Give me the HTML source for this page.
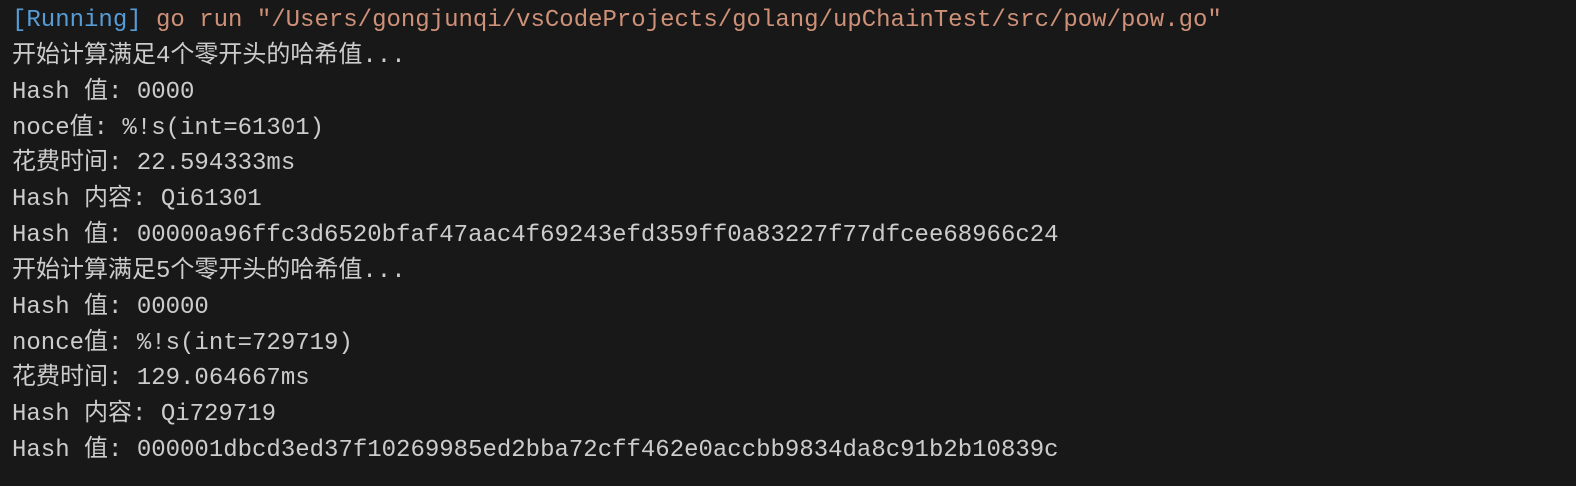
<!DOCTYPE html>
<html><head><meta charset="utf-8"><style>
html,body{margin:0;padding:0;background:#181818;width:1576px;height:486px;overflow:hidden}
pre{margin:0;padding:3px 0 0 12px;font-family:"Liberation Mono","Noto Sans CJK SC",monospace;font-size:24px;line-height:35.85px;color:#cccccc;white-space:pre}
.b{color:#569cd6}.o{color:#ce9178}
</style></head><body><pre><span class="b">[Running]</span> <span class="o">go run "/Users/gongjunqi/vsCodeProjects/golang/upChainTest/src/pow/pow.go"</span>
开始计算满足4个零开头的哈希值...
Hash 值: 0000
noce值: %!s(int=61301)
花费时间: 22.594333ms
Hash 内容: Qi61301
Hash 值: 00000a96ffc3d6520bfaf47aac4f69243efd359ff0a83227f77dfcee68966c24
开始计算满足5个零开头的哈希值...
Hash 值: 00000
nonce值: %!s(int=729719)
花费时间: 129.064667ms
Hash 内容: Qi729719
Hash 值: 000001dbcd3ed37f10269985ed2bba72cff462e0accbb9834da8c91b2b10839c</pre></body></html>
